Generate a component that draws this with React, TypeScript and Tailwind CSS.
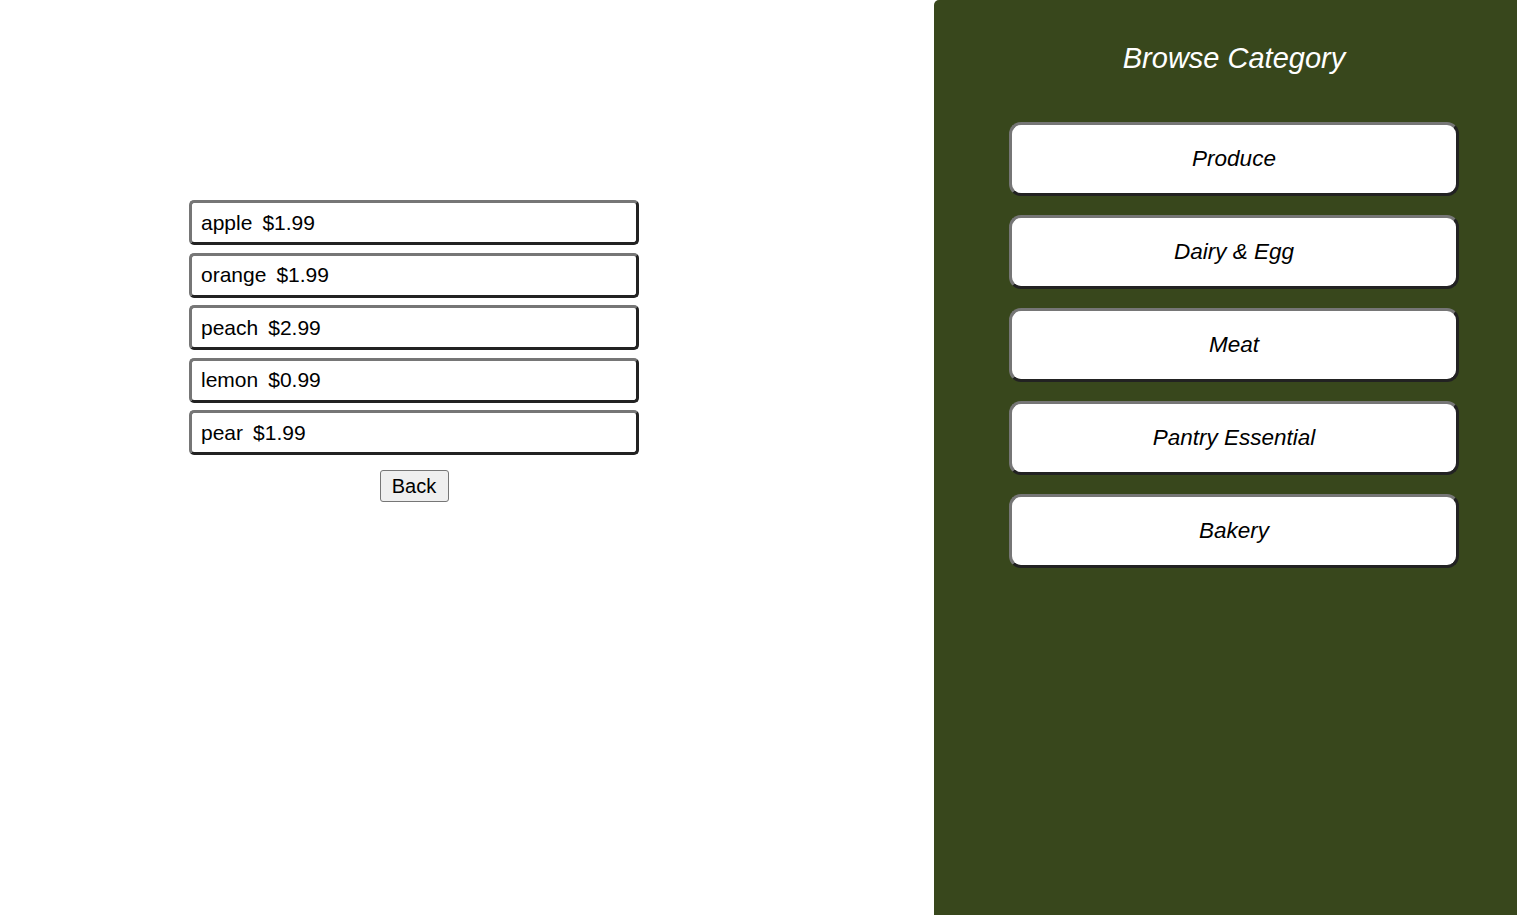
const items = [
  { name: "apple", price: "$1.99" },
  { name: "orange", price: "$1.99" },
  { name: "peach", price: "$2.99" },
  { name: "lemon", price: "$0.99" },
  { name: "pear", price: "$1.99" },
];

const categories = ["Produce", "Dairy & Egg", "Meat", "Pantry Essential", "Bakery"];

export default function App() {
  return (
    <div className="flex h-[915px] w-full bg-white font-['Liberation_Sans',Arial,sans-serif] text-black">
      <div className="flex-1">
        <div className="ml-[189px] mt-[200px] flex w-[450px] flex-col items-center">
          <ul className="flex w-full flex-col gap-[7.5px]">
            {items.map((i) => (
              <li
                key={i.name}
                className="flex h-[45px] items-center gap-[10px] rounded-[5px] border-[3px] border-t-[#767676] border-l-[#767676] border-r-[#222] border-b-[#222] bg-white pl-[9px] text-[21px]"
              >
                <span>{i.name}</span>
                <span>{i.price}</span>
              </li>
            ))}
          </ul>
          <button className="mt-[15px] h-[32px] w-[69px] rounded-[3px] border border-[#767676] bg-[#efefef] text-[20px] leading-none text-black">
            Back
          </button>
        </div>
      </div>
      <div className="w-[583px] shrink-0 rounded-tl-[5px] bg-[#38471c]">
        <div className="ml-[75px] flex w-[450px] flex-col">
          <h2 className="mt-[42px] text-center text-[29px] italic leading-[32px] text-white">Browse Category</h2>
          <div className="mt-[48px] flex flex-col gap-[19px]">
            {categories.map((c) => (
              <button
                key={c}
                className="h-[74px] w-full rounded-[12px] border-[3px] border-t-[#767676] border-l-[#767676] border-r-[#222] border-b-[#222] bg-white text-[22.5px] italic text-black"
              >
                {c}
              </button>
            ))}
          </div>
        </div>
      </div>
    </div>
  );
}
